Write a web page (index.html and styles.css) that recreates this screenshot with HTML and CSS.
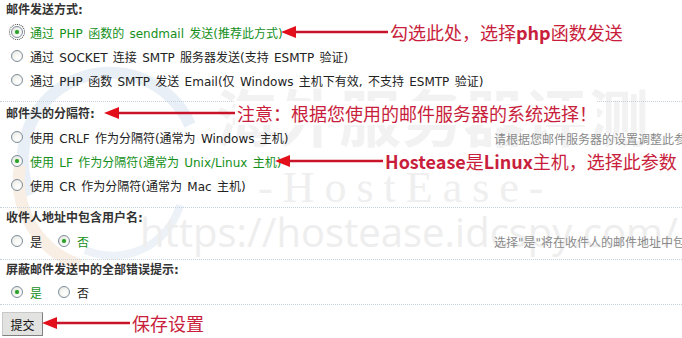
FILE: index.html
```html
<!DOCTYPE html>
<html lang="zh-CN">
<head>
<meta charset="utf-8">
<title>邮件设置</title>
<link rel="stylesheet" href="styles.css">
</head>
<body>
<div class="page">
  <div class="wm" aria-hidden="true">
    <svg class="wm-logo" width="240" height="240" viewBox="0 0 240 240">
      <path d="M40 150 A85 85 0 0 1 200 80" fill="none" stroke="#e8eff6" stroke-width="12"/>
      <path d="M30 120 A90 90 0 0 0 90 220" fill="none" stroke="#f8eee4" stroke-width="12"/>
      <path d="M95 205 A70 70 0 0 0 190 160" fill="none" stroke="#edf2f8" stroke-width="8"/>
    </svg>
    <div class="wm-cn">海外服务器评测</div>
    <div class="wm-en">-HostEase-</div>
    <div class="wm-url">https://hostease.idcspy.com/</div>
  </div>

  <form class="form">
    <section class="sec s1">
      <div class="main">
        <h3 class="label">邮件发送方式:</h3>
        <div class="opt on"><span class="radio checked focus"></span>通过 PHP 函数的 sendmail 发送(推荐此方式)</div>
        <div class="opt"><span class="radio"></span>通过 SOCKET 连接 SMTP 服务器发送(支持 ESMTP 验证)</div>
        <div class="opt"><span class="radio"></span>通过 PHP 函数 SMTP 发送 Email(仅 Windows 主机下有效, 不支持 ESMTP 验证)</div>
      </div>
    </section>

    <section class="sec s2">
      <div class="main">
        <h3 class="label">邮件头的分隔符:</h3>
        <div class="opt"><span class="radio"></span>使用 CRLF 作为分隔符(通常为 Windows 主机)</div>
        <div class="opt on"><span class="radio checked"></span>使用 LF 作为分隔符(通常为 Unix/Linux 主机)</div>
        <div class="opt"><span class="radio"></span>使用 CR 作为分隔符(通常为 Mac 主机)</div>
      </div>
      <div class="hint">请根据您邮件服务器的设置调整此参数</div>
    </section>

    <section class="sec s3">
      <div class="main">
        <h3 class="label">收件人地址中包含用户名:</h3>
        <div class="opt inline">
          <span class="choice"><span class="radio"></span>是</span>
          <span class="choice on"><span class="radio checked"></span>否</span>
        </div>
      </div>
      <div class="hint">选择"是"将在收件人的邮件地址中包含论坛用户名</div>
    </section>

    <section class="sec s4">
      <div class="main">
        <h3 class="label">屏蔽邮件发送中的全部错误提示:</h3>
        <div class="opt inline">
          <span class="choice on"><span class="radio checked"></span>是</span>
          <span class="choice"><span class="radio"></span>否</span>
        </div>
      </div>
    </section>

    <div class="actions"><button type="button" class="btn">提交</button></div>
  </form>

  <div class="note n1">
    <svg class="arrow" width="107" height="14" viewBox="0 0 107 14"><polygon points="0,7 15,1 15,13" fill="#e3101c"/><line x1="14" y1="7" x2="107" y2="7" stroke="#c8142a" stroke-width="2.5"/></svg>
    <span class="ntext">勾选此处，选择<b>php</b>函数发送</span>
  </div>
  <div class="note n2">
    <svg class="arrow" width="131" height="14" viewBox="0 0 131 14"><polygon points="0,7 15,1 15,13" fill="#e3101c"/><line x1="14" y1="7" x2="131" y2="7" stroke="#c8142a" stroke-width="2.5"/></svg>
    <span class="ntext">注意：根据您使用的邮件服务器的系统选择！</span>
  </div>
  <div class="note n3">
    <svg class="arrow" width="108" height="14" viewBox="0 0 108 14"><polygon points="0,7 15,1 15,13" fill="#e3101c"/><line x1="14" y1="7" x2="108" y2="7" stroke="#c8142a" stroke-width="2.5"/></svg>
    <span class="ntext"><b>Hostease</b>是<b>Linux</b>主机，选择此参数</span>
  </div>
  <div class="note n4">
    <svg class="arrow" width="88" height="14" viewBox="0 0 88 14"><polygon points="0,7 15,1 15,13" fill="#e3101c"/><line x1="14" y1="7" x2="88" y2="7" stroke="#c8142a" stroke-width="2.5"/></svg>
    <span class="ntext">保存设置</span>
  </div>
</div>
</body>
</html>
```

FILE: styles.css
```css
* { box-sizing: border-box; }
html, body { margin: 0; padding: 0; background: #fff; }

.page {
  position: relative;
  width: 682px;
  height: 338px;
  overflow: hidden;
  font-family: "DejaVu Sans", "Noto Sans CJK SC", sans-serif;
  font-size: 12px;
  color: #222;
}

/* watermark */
.wm { position: absolute; left: 0; top: 0; width: 682px; height: 338px; z-index: 0; pointer-events: none; }
.wm-logo { position: absolute; left: -10px; top: 45px; }
.wm-cn {
  position: absolute; left: 215px; top: 70px;
  font-family: "Noto Sans CJK SC", sans-serif; font-weight: 700;
  font-size: 62px; line-height: 90px; color: #f2f2f2; white-space: nowrap;
}
.wm-en {
  position: absolute; left: 258px; top: 163px;
  font-family: "Liberation Serif", serif; font-size: 44px; line-height: 50px;
  letter-spacing: 10px; color: #efefef; white-space: nowrap;
}
.wm-url {
  position: absolute; left: 140px; top: 205px;
  font-family: "Open Sans", "DejaVu Sans", sans-serif; font-size: 40px; line-height: 54px;
  color: #eeeeee; white-space: nowrap;
}

.form { position: relative; z-index: 1; margin: 0; }

.sec {
  display: grid;
  grid-template-columns: 494px 1fr;
  border-bottom: 1px dotted #c4d2de;
}
.s1 { padding-bottom: 9px; }
.s2 { padding-bottom: 10px; }
.s3 { padding-bottom: 6px; }
.s4 { padding-bottom: 0; }

.label {
  margin: 0;
  padding-left: 6px;
  font-size: 12px;
  font-weight: 700;
  color: #333;
  height: 20px;
  line-height: 20px;
  white-space: nowrap;
}
.s2 .label { height: 23px; line-height: 24px; }
.s3 .label { height: 21px; line-height: 21px; }

.opt {
  display: flex;
  align-items: center;
  height: 24px;
  padding-left: 11px;
  white-space: pre;
  word-spacing: 1.5px;
  color: #222;
}
.opt.on, .choice.on { color: #14901a; }
.opt.inline { gap: 16px; word-spacing: 0; }
.choice { display: flex; align-items: center; }

.radio {
  width: 12px; height: 12px;
  border: 1px solid #7f8e9c;
  border-radius: 50%;
  background: radial-gradient(circle at 60% 65%, #ffffff 0%, #f2f2ee 55%, #d7d9d4 100%);
  margin-right: 7px;
  flex: none;
  position: relative;
}
.radio.checked::after {
  content: "";
  position: absolute;
  left: 3px; top: 3px;
  width: 4px; height: 4px;
  border-radius: 50%;
  background: #2ea12a;
  box-shadow: 0 0 1px #5fc35a;
}
.radio.focus { outline: 1px dotted #333; outline-offset: 1px; }

.hint {
  color: #8a8a8a;
  white-space: nowrap;
  overflow: hidden;
  font-family: "DejaVu Sans", "Noto Sans CJK SC", sans-serif;
  font-size: 12px;
  line-height: 14px;
}
.s2 .hint { padding-top: 31px; }
.s3 .hint { padding-top: 28px; }

.actions { padding: 7px 0 0 2px; }
.btn {
  width: 41px; height: 24px;
  padding: 0;
  font-family: "Noto Sans CJK SC", sans-serif;
  font-size: 12px;
  color: #111;
  background: #e2e2e0;
  border: 1px solid;
  border-color: #c8c8c8 #808080 #808080 #c8c8c8;
}

/* annotations over the screenshot */
.note {
  position: absolute;
  z-index: 2;
  display: flex;
  align-items: center;
  height: 24px;
  white-space: nowrap;
}
.arrow { display: block; flex: none; }
.ntext {
  font-family: "Noto Sans CJK SC", sans-serif;
  font-size: 18px;
  line-height: 24px;
  color: #c81e3c;
  background: #fff;
  padding-left: 2px;
}
.ntext b { font-weight: 700; }
.n1 { left: 281px; top: 20px; }
.n2 { left: 104px; top: 101px; }
.n3 { left: 275px; top: 149px; }
.n4 { left: 42px; top: 311px; }
```
